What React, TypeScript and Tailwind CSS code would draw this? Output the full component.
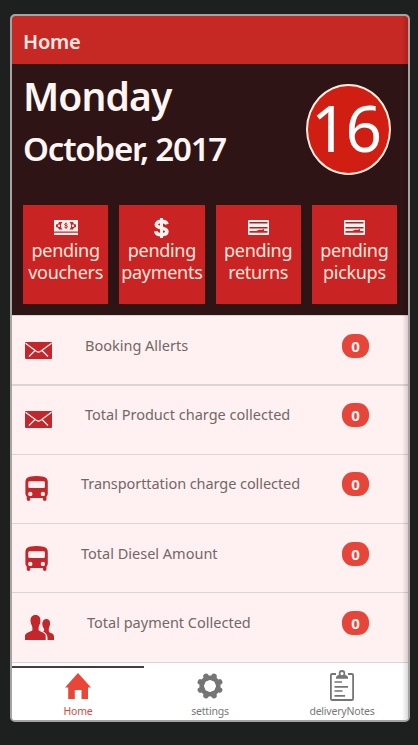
import React from "react";

interface IconProps {
  className?: string;
}

interface Shortcut {
  label: string;
  icon: React.ReactNode;
}

interface Entry {
  title: string;
  titleClass: string;
  rowClass: string;
  count: number;
  icon: React.ReactNode;
}

function CashIcon({ className }: IconProps) {
  return (
    <svg viewBox="0 0 24 15" className={className}>
      <path fill="#fff3f0" d="M0 0h24v11.5H0zM0 12.8h24V15H0z" />
      <path fill="#c92423" d="M5 2h3.600a5 5 0 0 0 0 7.500H5A3 3 0 0 0 2 7V4.500A3 3 0 0 0 5 2zM15.400 2H19a3 3 0 0 0 3 2.500V7a3 3 0 0 0-3 2.500h-3.600a5 5 0 0 0 0-7.500z" />
      <circle cx="5" cy="5.700" r="1.200" fill="#fff3f0" />
      <circle cx="19" cy="5.700" r="1.200" fill="#fff3f0" />
      <path fill="none" stroke="#c92423" strokeWidth="0.900" d="M13.500 4.300c-.6-.9-3-.9-3 .2 0 1.300 3.100.9 3.100 2.300 0 1.200-2.700 1.200-3.300.2M12 2.600v6.300" />
    </svg>
  );
}

function DollarIcon({ className }: IconProps) {
  return (
    <svg viewBox="0 0 15 20" className={className} fill="none" stroke="#fff3f0">
      <path strokeWidth="3.600" d="M13 6.200C12.400 4.200 10.400 3.400 7.500 3.400 4.200 3.400 2.300 4.600 2.300 6.500c0 4.600 10.600 2.200 10.600 7 0 2-2.100 3.100-5.300 3.100-3.400 0-5.500-1-5.900-3.400" />
      <path strokeWidth="3" d="M7.500 0v20" />
    </svg>
  );
}

function CardIcon({ className }: IconProps) {
  return (
    <svg viewBox="0 0 21 15" className={className}>
      <rect width="21" height="15" rx="1" fill="#fff3f0" />
      <path fill="#a92323" d="M1.500 2h18v1.500h-18zM1.500 7h18v1.500h-18z" />
      <path fill="#c92423" d="M1.500 11h6.500l4-1.500 1 .5 3-1v2h3.500v1.700h-18z" />
    </svg>
  );
}

function MailIcon({ className }: IconProps) {
  return (
    <svg viewBox="0 0 27 17" className={className}>
      <rect width="27" height="17" rx="1" fill="#c3272b" />
      <path fill="none" stroke="#fff0f0" strokeWidth="1.300" d="M.5 1.200 11.300 9.300q2.200 1.500 4.400 0L26.500 1.200M10 8.500 4 14.500M17 8.500l6 6" />
    </svg>
  );
}

function BusIcon({ className }: IconProps) {
  return (
    <svg viewBox="0 0 23 25" className={className}>
      <path
        fill="#c3272b"
        fillRule="evenodd"
        d="M4.500.8Q11.500-.6 18.500.8 22.800 1.700 22.800 6V17.500Q22.800 19.600 21.500 20.500V23.300Q21.500 25 19.700 25T17.900 23.300V22H5.300V23.300Q5.300 25 3.500 25T1.700 23.300V20.500Q.4 19.600.4 17.500V6Q.4 1.700 4.500.8ZM4.600 5.200Q3.300 5.200 3.300 6.500V10.700Q3.300 12 4.600 12H18.600Q19.900 12 19.900 10.700V6.500Q19.900 5.200 18.600 5.200ZM5.300 15.700a2.200 2.200 0 1 0 0 4.400 2.200 2.200 0 1 0 0-4.400ZM17.900 15.700a2.200 2.200 0 1 0 0 4.400 2.200 2.200 0 1 0 0-4.400Z"
      />
    </svg>
  );
}

function PeopleIcon({ className }: IconProps) {
  return (
    <svg viewBox="0 0 29 25" className={className} fill="#c3272b">
      <path d="M10.500 0C14 0 15.800 2.500 15.400 6.500 15.200 9.500 13.600 11 13.600 12.800V15C14.500 17.300 20.700 17 20.700 21V25H0V21C0 17 6.500 17.300 7.400 15V12.800C7.400 11 5.800 9.500 5.600 6.500 5.200 2.500 7 0 10.500 0Z" />
      <path d="M21.300 4C24 4 25.400 6 25.100 9 24.900 11.300 23.800 12.500 23.800 14V16.200C24.500 18.200 29 18 29 21.500V25H22.500C23 20 21 18 18 16.500 19.500 16 19.400 14.500 18.800 13.500 16.200 10 17 4 21.300 4Z" />
    </svg>
  );
}

function HomeIcon({ className }: IconProps) {
  return (
    <svg viewBox="0 0 26 26" className={className} fill="#e94637">
      <path d="M13 0 26 14.500H23V26H16.500V17H9.800V26H3.200V14.500H0Z" />
    </svg>
  );
}

function GearIcon({ className }: IconProps) {
  return (
    <svg viewBox="-14 -14 28 28" className={className} fill="none" stroke="#757575">
      <circle r="8.300" strokeWidth="4.600" />
      <g strokeWidth="5.600" strokeLinecap="round" transform="rotate(22.500)">
        <path d="M0-10.400V-8.500M0 10.400V8.500M-10.400 0H-8.500M10.400 0H8.500" />
        <path transform="rotate(45)" d="M0-10.400V-8.500M0 10.400V8.500M-10.400 0H-8.500M10.400 0H8.500" />
      </g>
    </svg>
  );
}

function ClipboardIcon({ className }: IconProps) {
  return (
    <svg viewBox="0 0 24 31" className={className}>
      <path fill="none" stroke="#757575" strokeWidth="1.800" d="M6 4H2.200Q.9 4 .9 5.300V28.700Q.9 30 2.200 30H21.800Q23.100 30 23.100 28.700V5.300Q23.100 4 21.800 4H18" />
      <path fill="#757575" fillRule="evenodd" d="M6 8.800V7.300Q6.300 5.300 8.800 5V3.300A3.200 3.200 0 0 1 15.200 3.300V5Q17.700 5.300 18 7.300V8.800ZM12 2a1.600 1.600 0 1 0 0 3.200A1.600 1.600 0 0 0 12 2Z" />
      <path fill="none" stroke="#757575" strokeWidth="1.700" d="M4.500 12H12M4.500 16.800H18M4.500 21H12.500M4.500 25.800H15" />
    </svg>
  );
}

const shortcuts: Shortcut[] = [
  { label: "vouchers", icon: <CashIcon className="h-[15px] w-6" /> },
  { label: "payments", icon: <DollarIcon className="h-5 w-[15px]" /> },
  { label: "returns", icon: <CardIcon className="h-[15px] w-[21px]" /> },
  { label: "pickups", icon: <CardIcon className="h-[15px] w-[21px]" /> },
];

const entries: Entry[] = [
  { title: "Booking Allerts", titleClass: "pl-[73px]", rowClass: "h-[70px] border-b-2 pt-px", count: 0, icon: <MailIcon className="mt-[25px] h-[17px] w-[27px]" /> },
  { title: "Total Product charge collected", titleClass: "pl-[73px]", rowClass: "h-[69px] border-b", count: 0, icon: <MailIcon className="mt-[25px] h-[17px] w-[27px]" /> },
  { title: "Transporttation charge collected", titleClass: "pl-[69px] tracking-[-0.07px]", rowClass: "h-[69px] border-b", count: 0, icon: <BusIcon className="mt-[21px] h-[25px] w-[23px]" /> },
  { title: "Total Diesel Amount", titleClass: "pl-[69px]", rowClass: "h-[69px] border-b pt-px", count: 0, icon: <BusIcon className="mt-[21px] h-[25px] w-[23px]" /> },
  { title: "Total payment Collected", titleClass: "pl-[75px]", rowClass: "h-[70px] border-b pt-px", count: 0, icon: <PeopleIcon className="mt-[21px] h-[25px] w-[29px]" /> },
];

function ShortcutCard({ item }: { item: Shortcut }) {
  return (
    <button className="flex h-[99px] flex-1 flex-col items-center bg-[#c92423] pt-[11px] text-[18px] leading-[22px] tracking-[-0.3px] text-[#ffe9df]">
      <span className="flex h-[23px] items-center justify-center">{item.icon}</span>
      <span>
        pending
        <br />
        {item.label}
      </span>
    </button>
  );
}

function EntryRow({ entry }: { entry: Entry }) {
  return (
    <li className={`flex border-[#dfd3d4] ${entry.rowClass}`}>
      <div className="w-0 pl-[13px]">{entry.icon}</div>
      <p className={`-ml-[13px] flex-1 pt-[18px] text-[14.5px] leading-5 text-[#736767] ${entry.titleClass}`}>{entry.title}</p>
      <span className="mt-[17px] mr-[39px] flex h-6 w-[27px] items-center justify-center rounded-[11px] bg-[#e6453a] text-[15px] font-bold text-[#fff3f0]">
        {entry.count}
      </span>
    </li>
  );
}

export default function App() {
  return (
    <div className="h-[745px] w-[418px] bg-[#1e1f1f] px-2.5 pt-3.5 font-['Noto_Sans',sans-serif]">
      <div className="relative flex h-[708px] w-[400px] flex-col overflow-hidden rounded-[5px] border-2 border-[#a5a3a3] bg-white">
        {/* Header */}
        <header className="flex h-12 items-center bg-[#c62823] pt-[3px] pl-[11px] text-[20px] font-semibold tracking-[-0.2px] text-[#ffeae5]">
          Home
        </header>

        {/* Date */}
        <section className="flex h-[251px] flex-col bg-[#2e1415] px-[11px]">
          <div className="flex h-[141px] justify-between text-white">
            <div className="font-semibold text-[#fff6f4]">
              <h1 className="pt-1.5 text-[39px] leading-[52px] tracking-[-0.9px]">Monday</h1>
              <h2 className="mt-1 text-[33px] leading-[46px] tracking-[-1.2px]">October, 2017</h2>
            </div>
            <div className="mt-5 mr-1.5 flex h-[91px] w-[85px] items-center justify-center rounded-[50%] border-2 border-[#fff0e4] bg-[#d01f12] pr-1.5 pb-1 text-[64px] leading-none tracking-[-2px]">
              16
            </div>
          </div>
          <div className="flex gap-[11px]">
            {shortcuts.map((item) => (
              <ShortcutCard key={item.label} item={item} />
            ))}
          </div>
        </section>

        {/* List */}
        <ul className="flex-none border-t border-[#dfd3d4] bg-[#fff1f1]">
          {entries.map((entry) => (
            <EntryRow key={entry.title} entry={entry} />
          ))}
        </ul>

        {/* Tabs */}
        <nav className="mt-[3px] grid flex-1 grid-cols-3 bg-white text-[10.5px] leading-[14px] tracking-[-0.2px] text-[#777]">
          <a className="flex flex-col items-center border-t-2 border-[#493b3f] pt-[5px] text-[#d14c44]">
            <HomeIcon className="mb-[5px] h-[26px] w-[26px]" />
            Home
          </a>
          <a className="flex flex-col items-center pt-[6px]">
            <GearIcon className="mb-1 h-7 w-7" />
            settings
          </a>
          <a className="flex flex-col items-center pt-[4px]">
            <ClipboardIcon className="mb-[3px] h-[31px] w-6" />
            deliveryNotes
          </a>
        </nav>

        {/* Right edge shade */}
        <div className="pointer-events-none absolute inset-y-0 right-0 w-1.5 bg-linear-to-r from-transparent to-black/15" />
      </div>
    </div>
  );
}
